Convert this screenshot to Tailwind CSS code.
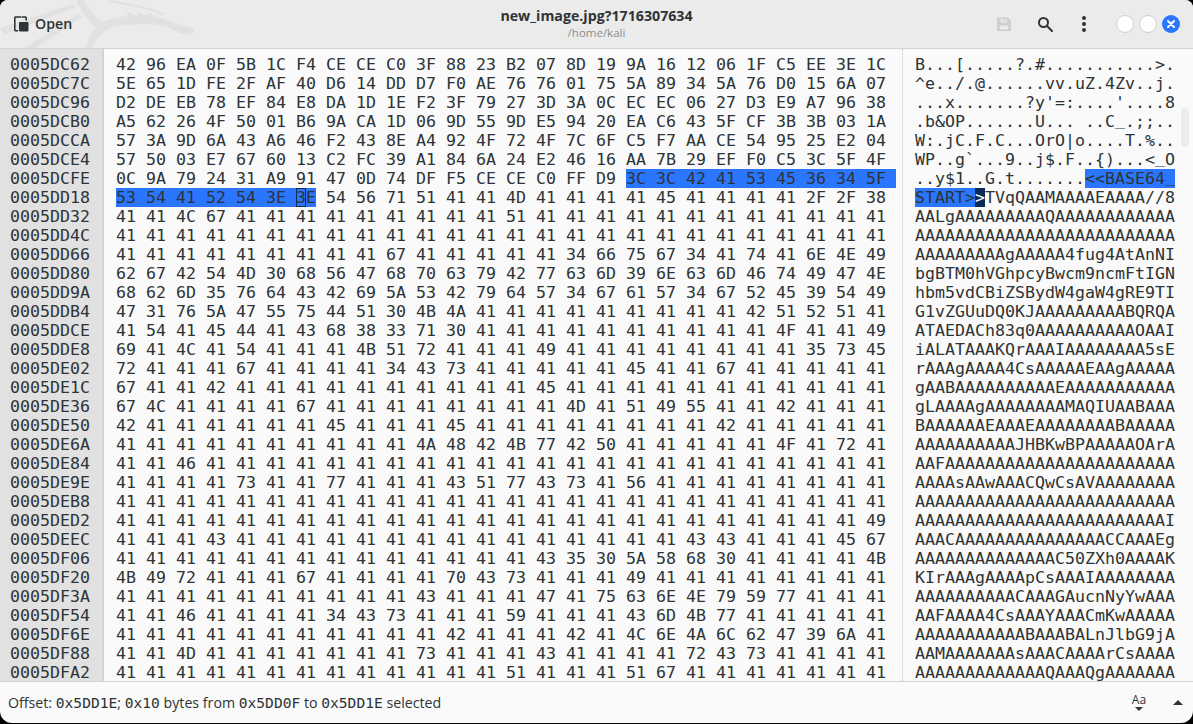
<!DOCTYPE html>
<html lang='en'>
<head>
	<meta charset='UTF-8'>
	<title>new_image.jpg - GHex</title>
	<script src="https://cdn.jsdelivr.net/npm/@tailwindcss/browser@4"></script>
</head>
<body class='bg-black h-[724px] overflow-hidden'>
	<div class="relative h-[723px] flex flex-col bg-[#fafafa] rounded-t-[8px] rounded-b-[12px] overflow-hidden font-['Open_Sans',sans-serif] text-[#2e3436]">

		<!-- Header bar -->
		<header class="relative h-[49px] shrink-0 grid grid-cols-[1fr_auto_1fr] items-center bg-[#ebebeb] border-b border-[#d3d3d3]">
			<svg class="absolute left-0 top-0" width="200" height="48" viewBox="0 0 200 48" fill="#e1e1e1">
				<path d="M0 28 L72 4 L76 7 L4 35 Z"/>
				<path d="M24 48 L78 14 L82 17 L36 48 Z"/>
				<path d="M76 0 L84 0 C88 8 94 17 102 22 C116 17 140 12 158 17 L172 22 L195 29 L192 35 L180 33 L165 26 C150 23 125 24 112 27 C102 31 96 38 92 48 L86 48 C88 38 92 32 96 27 C88 20 80 10 76 0 Z"/>
				<path d="M110 0 C130 3 150 7 165 14 L163 15 C148 9 128 5 108 2 Z"/>
				<path d="M125 10 L136 16 L130 17 Z M136 10 L146 16 L141 17 Z M148 12 L156 18 L151 18 Z"/>
			</svg>
			<div class="relative flex items-center pl-[14px] gap-[6px]">
				<svg width="15" height="16" viewBox="0 0 15 16" class="text-[#2e3436]">
					<path d="M7.5 1 H1.5 A.8 .8 0 0 0 .8 1.8 V14 A.8 .8 0 0 0 1.5 14.8 H4 M8 1 H11.5 A.8 .8 0 0 1 12.2 1.8 V4.5" fill="none" stroke="currentColor" stroke-width="1.6"/>
					<rect x="5" y="6" width="9.5" height="9.5" rx="1" fill="currentColor"/>
				</svg>
				<span class="text-[14.2px] font-semibold">Open</span>
			</div>
			<div class="relative flex flex-col items-center -mt-[1px]">
				<span class="text-[14.2px] font-bold leading-[18px]">new_image.jpg?1716307634</span>
				<span class="text-[11.5px] leading-[16px] text-[#8b8e8f]">/home/kali</span>
			</div>
			<div class="relative flex items-center justify-end pr-[13px]">
				<svg width="16" height="16" viewBox="0 0 16 16" fill="#cfcfcf">
					<path fill-rule="evenodd" d="M2 1.5 H12 L15 4.5 V14 A1 1 0 0 1 14 15 H2 A1 1 0 0 1 1 14 V2.5 A1 1 0 0 1 2 1.5 Z M4.5 3 V6.5 H11 V3 H9.5 V5.5 H8 V3 Z M4 9.5 V13.5 H12 V9.5 Z"/>
				</svg>
				<svg class="ml-[25px]" width="16" height="16" viewBox="0 0 16 16" fill="none" stroke="#2e3436" stroke-width="2">
					<circle cx="6.5" cy="6.5" r="4.5"/>
					<path d="M10 10 L15 15" stroke-linecap="round"/>
				</svg>
				<svg class="ml-[23px]" width="16" height="16" viewBox="0 0 16 16" fill="#2e3436">
					<circle cx="8" cy="2" r="2"/>
					<circle cx="8" cy="8" r="2"/>
					<circle cx="8" cy="14" r="2"/>
				</svg>
				<span class="ml-[24px] w-[18px] h-[18px] rounded-full bg-white border border-[#cfcfcf]"></span>
				<span class="ml-[5px] w-[18px] h-[18px] rounded-full bg-white border border-[#cfcfcf]"></span>
				<span class="ml-[5px] w-[18px] h-[18px] rounded-full bg-[#2a76fe] flex items-center justify-center">
					<svg width="10" height="10" viewBox="0 0 10 10" stroke="#fff" stroke-width="2" stroke-linecap="round">
						<path d="M2 2 L8 8 M8 2 L2 8"/>
					</svg>
				</span>
			</div>
		</header>

		<!-- Hex view -->
		<main class="relative flex-1 flex overflow-hidden font-['DejaVu_Sans_Mono',monospace] text-[16.61px] leading-[19px] whitespace-pre">
			<div id="offsetCol" class="w-[102px] shrink-0 pt-[6px] pl-[10px] bg-[#e1e1e1]"></div>
			<div class="w-[2px] shrink-0 bg-[#d3d3d3]"></div>
			<div id="hexCol" class="w-[792px] shrink-0 pt-[6px] pl-[12px]"></div>
			<div class="w-0 shrink-0 border-l border-dotted border-[#c4c4c4] ml-[6px]"></div>
			<div id="asciiCol" class="flex-1 pt-[6px] pl-[12px]"></div>
			<div class="absolute right-[4px] top-[59px] w-[8px] h-[39px] rounded-full bg-[#ececec]"></div>
		</main>

		<!-- Status bar -->
		<footer class="h-[42px] shrink-0 flex items-center justify-between border-t border-[#d3d3d3] pl-[8px] pr-[10px]">
			<p class="text-[14.2px]">Offset: <span class="font-['DejaVu_Sans_Mono',monospace] text-[14.6px]">0x5DD1E</span>; <span class="font-['DejaVu_Sans_Mono',monospace] text-[14.6px]">0x10</span> bytes from <span class="font-['DejaVu_Sans_Mono',monospace] text-[14.6px]">0x5DD0F</span> to <span class="font-['DejaVu_Sans_Mono',monospace] text-[14.6px]">0x5DD1E</span> selected</p>
			<div class="flex items-center">
				<div class="flex flex-col items-center w-[16px]">
					<span class="text-[12px] leading-[11px]">Aa</span>
					<span class="mt-[2px] w-0 h-0 border-x-[4px] border-x-transparent border-t-[4px] border-t-[#2e3436]"></span>
				</div>
				<span class="ml-[26px] w-0 h-0 border-x-[5px] border-x-transparent border-b-[5px] border-b-[#2e3436]"></span>
			</div>
		</footer>
	</div>

	<script>
		const START_OFFSET = 0x5DC62;
		const PER_ROW = 26;
		const rows = [
			'42 96 EA 0F 5B 1C F4 CE CE C0 3F 88 23 B2 07 8D 19 9A 16 12 06 1F C5 EE 3E 1C',
			'5E 65 1D FE 2F AF 40 D6 14 DD D7 F0 AE 76 76 01 75 5A 89 34 5A 76 D0 15 6A 07',
			'D2 DE EB 78 EF 84 E8 DA 1D 1E F2 3F 79 27 3D 3A 0C EC EC 06 27 D3 E9 A7 96 38',
			'A5 62 26 4F 50 01 B6 9A CA 1D 06 9D 55 9D E5 94 20 EA C6 43 5F CF 3B 3B 03 1A',
			'57 3A 9D 6A 43 A6 46 F2 43 8E A4 92 4F 72 4F 7C 6F C5 F7 AA CE 54 95 25 E2 04',
			'57 50 03 E7 67 60 13 C2 FC 39 A1 84 6A 24 E2 46 16 AA 7B 29 EF F0 C5 3C 5F 4F',
			'0C 9A 79 24 31 A9 91 47 0D 74 DF F5 CE CE C0 FF D9 3C 3C 42 41 53 45 36 34 5F',
			'53 54 41 52 54 3E 3E 54 56 71 51 41 41 4D 41 41 41 41 45 41 41 41 41 2F 2F 38',
			'41 41 4C 67 41 41 41 41 41 41 41 41 41 51 41 41 41 41 41 41 41 41 41 41 41 41',
			'41 41 41 41 41 41 41 41 41 41 41 41 41 41 41 41 41 41 41 41 41 41 41 41 41 41',
			'41 41 41 41 41 41 41 41 41 67 41 41 41 41 41 34 66 75 67 34 41 74 41 6E 4E 49',
			'62 67 42 54 4D 30 68 56 47 68 70 63 79 42 77 63 6D 39 6E 63 6D 46 74 49 47 4E',
			'68 62 6D 35 76 64 43 42 69 5A 53 42 79 64 57 34 67 61 57 34 67 52 45 39 54 49',
			'47 31 76 5A 47 55 75 44 51 30 4B 4A 41 41 41 41 41 41 41 41 41 42 51 52 51 41',
			'41 54 41 45 44 41 43 68 38 33 71 30 41 41 41 41 41 41 41 41 41 41 4F 41 41 49',
			'69 41 4C 41 54 41 41 41 4B 51 72 41 41 41 49 41 41 41 41 41 41 41 41 35 73 45',
			'72 41 41 41 67 41 41 41 41 34 43 73 41 41 41 41 41 45 41 41 67 41 41 41 41 41',
			'67 41 41 42 41 41 41 41 41 41 41 41 41 41 45 41 41 41 41 41 41 41 41 41 41 41',
			'67 4C 41 41 41 41 67 41 41 41 41 41 41 41 41 4D 41 51 49 55 41 41 42 41 41 41',
			'42 41 41 41 41 41 41 45 41 41 41 45 41 41 41 41 41 41 41 41 42 41 41 41 41 41',
			'41 41 41 41 41 41 41 41 41 41 4A 48 42 4B 77 42 50 41 41 41 41 41 4F 41 72 41',
			'41 41 46 41 41 41 41 41 41 41 41 41 41 41 41 41 41 41 41 41 41 41 41 41 41 41',
			'41 41 41 41 73 41 41 77 41 41 41 43 51 77 43 73 41 56 41 41 41 41 41 41 41 41',
			'41 41 41 41 41 41 41 41 41 41 41 41 41 41 41 41 41 41 41 41 41 41 41 41 41 41',
			'41 41 41 41 41 41 41 41 41 41 41 41 41 41 41 41 41 41 41 41 41 41 41 41 41 49',
			'41 41 41 43 41 41 41 41 41 41 41 41 41 41 41 41 41 41 41 43 43 41 41 41 45 67',
			'41 41 41 41 41 41 41 41 41 41 41 41 41 41 43 35 30 5A 58 68 30 41 41 41 41 4B',
			'4B 49 72 41 41 41 67 41 41 41 41 70 43 73 41 41 41 49 41 41 41 41 41 41 41 41',
			'41 41 41 41 41 41 41 41 41 41 43 41 41 41 47 41 75 63 6E 4E 79 59 77 41 41 41',
			'41 41 46 41 41 41 41 34 43 73 41 41 41 59 41 41 41 43 6D 4B 77 41 41 41 41 41',
			'41 41 41 41 41 41 41 41 41 41 41 42 41 41 41 42 41 4C 6E 4A 6C 62 47 39 6A 41',
			'41 41 4D 41 41 41 41 41 41 41 73 41 41 41 43 41 41 41 41 72 43 73 41 41 41 41',
			'41 41 41 41 41 41 41 41 41 41 41 41 41 51 41 41 41 51 67 41 41 41 41 41 41 41'
		];

		const selected = 'inline-block h-[19px] bg-[#2a76fe]';

		const cell = (text, className) => {
			const span = document.createElement('span');
			span.textContent = text;
			if (className) span.className = className;
			return span;
		};

		// Underscores sit at the bottom edge of the row, lift them so the next row doesn't cover them
		const asciiCell = (text, className) => {
			const span = cell('', className);
			text.split(/(_)/).forEach(part => {
				span.append(part === '_' ? cell(part, 'relative -top-[2px]') : part);
			});
			return span;
		};

		const toAscii = (bytes) => bytes.map(b => {
			const code = parseInt(b, 16);
			return code >= 0x20 && code < 0x7f ? String.fromCharCode(code) : '.';
		}).join('');

		const offsetCol = document.getElementById('offsetCol');
		const hexCol = document.getElementById('hexCol');
		const asciiCol = document.getElementById('asciiCol');

		// Selection runs from byte 17 of row 6 to byte 6 of row 7, cursor on the last byte
		rows.forEach((row, i) => {
			const bytes = row.split(' ');
			const offset = (START_OFFSET + i * PER_ROW).toString(16).toUpperCase().padStart(8, '0');

			const offsetRow = document.createElement('div');
			offsetRow.textContent = offset;
			offsetCol.appendChild(offsetRow);

			const hexRow = document.createElement('div');
			const asciiRow = document.createElement('div');
			const ascii = toAscii(bytes);

			if (i === 6) {
				hexRow.append(cell(bytes.slice(0, 17).join(' ') + ' '));
				hexRow.append(cell(bytes.slice(17).join(' ') + ' ', selected));
				asciiRow.append(asciiCell(ascii.slice(0, 17)));
				asciiRow.append(asciiCell(ascii.slice(17), selected));
			} else if (i === 7) {
				hexRow.append(cell(bytes.slice(0, 6).join(' ') + ' ', selected));
				hexRow.append(cell('3', 'inline-block h-[19px] bg-[#2a76fe] shadow-[inset_0_0_0_1px_#0b2a5a]'));
				hexRow.append(cell('E', selected));
				hexRow.append(cell(' ' + bytes.slice(7).join(' ')));
				asciiRow.append(cell(ascii.slice(0, 6), selected));
				asciiRow.append(cell(ascii.slice(6, 7), 'inline-block h-[19px] bg-[#0b2a5a] text-white'));
				asciiRow.append(cell(ascii.slice(7)));
			} else {
				hexRow.textContent = row;
				asciiRow.append(asciiCell(ascii));
			}
			hexCol.appendChild(hexRow);
			asciiCol.appendChild(asciiRow);
		});
	</script>
</body>
</html>
